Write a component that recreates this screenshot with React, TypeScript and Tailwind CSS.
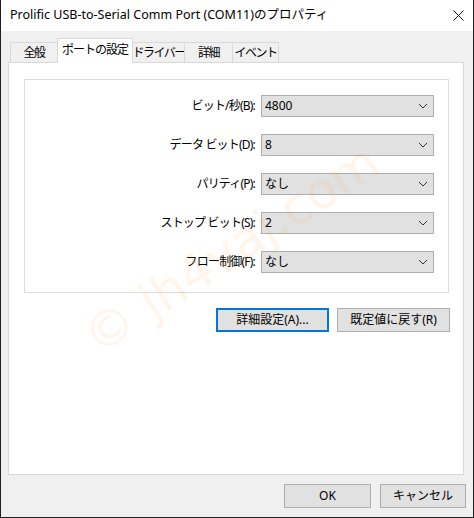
import React from "react";

const font = { fontFamily: '"Noto Sans", "Noto Sans CJK JP", sans-serif' };

const Chevron = () => (
  <svg width="10" height="6" viewBox="0 0 10 6" className="shrink-0">
    <path d="M1 1 L5 5 L9 1" fill="none" stroke="#333" strokeWidth="1" />
  </svg>
);

const rows = [
  { label: "ビット/秒(B):", value: "4800" },
  { label: "データ ビット(D):", value: "8" },
  { label: "パリティ(P):", value: "なし" },
  { label: "ストップ ビット(S):", value: "2" },
  { label: "フロー制御(F):", value: "なし" },
];

const tabs = [
  { name: "全般", w: "w-[48px]" },
  { name: "ポートの設定", w: "w-[76px]", active: true },
  { name: "ドライバー", w: "w-[53px]" },
  { name: "詳細", w: "w-[49px]" },
  { name: "イベント", w: "w-[47px]" },
];

export default function App() {
  return (
    <div
      className="relative w-[474px] h-[518px] bg-[#f0f0f0] border-l border-r border-b border-[#1f1f1f] text-[12px] text-black overflow-hidden flex flex-col"
      style={font}
    >
      {/* title bar */}
      <div className="h-[31px] bg-white flex items-center justify-between pl-[9px] pr-[9px] shrink-0">
        <span className="text-[12.5px]">Prolific USB-to-Serial Comm Port (COM11)のプロパティ</span>
        <svg width="11" height="11" viewBox="0 0 11 11">
          <path d="M0.5 0.5 L10.5 10.5 M10.5 0.5 L0.5 10.5" stroke="#111" strokeWidth="1" />
        </svg>
      </div>

      {/* tabs */}
      <div className="h-[31px] flex items-end pl-[9px] shrink-0">
        {tabs.map((t, i) => (
          <div
            key={t.name}
            className={
              t.active
                ? `${t.w} h-[25px] -ml-px -mb-px relative z-10 bg-white border border-b-0 border-[#d9d9d9] flex items-center justify-center whitespace-nowrap tracking-[-1px] pb-[2px]`
                : `${t.w} h-[20px] ${i === 0 ? "" : "-ml-px"} bg-[#f0f0f0] border border-b-0 border-[#d9d9d9] flex items-center justify-center whitespace-nowrap tracking-[-1.5px]`
            }
          >
            {t.name}
          </div>
        ))}
      </div>

      {/* page */}
      <div className="ml-[7px] w-[456px] h-[413px] bg-white border border-[#d9d9d9] pt-[16px] pl-[15px] shrink-0">
        <div className="w-[425px] h-[214px] border border-[#dcdcdc] flex flex-col gap-[17px] pt-[15px] pr-[14px]">
          {rows.map((r) => (
            <div key={r.label} className="flex items-center justify-end gap-[6px]">
              <span className="tracking-[-0.8px] whitespace-nowrap">{r.label}</span>
              <div className="w-[173px] h-[22px] bg-[#e1e1e1] border border-[#adadad] flex items-center justify-between pl-[3px] pr-[5px]">
                <span>{r.value}</span>
                <Chevron />
              </div>
            </div>
          ))}
        </div>
        <div className="w-[426px] flex justify-end gap-[8px] mt-[15px]">
          <button className="w-[113px] h-[24px] bg-[#e1e1e1] border-2 border-[#0078d7] flex items-center justify-center">
            詳細設定(A)...
          </button>
          <button className="w-[113px] h-[24px] bg-[#e1e1e1] border border-[#adadad] flex items-center justify-center">
            既定値に戻す(R)
          </button>
        </div>
      </div>

      {/* footer */}
      <div className="flex justify-end gap-[9px] pt-[9px] pr-[7px]">
        <button className="w-[87px] h-[24px] bg-[#e1e1e1] border border-[#adadad] flex items-center justify-center">
          OK
        </button>
        <button className="w-[86px] h-[24px] bg-[#e1e1e1] border border-[#adadad] flex items-center justify-center">
          キャンセル
        </button>
      </div>

      {/* watermark */}
      <span
        className="absolute left-[88px] top-[305px] text-[50px] text-[#ff9a2e] opacity-[0.09] -rotate-[33deg] origin-left whitespace-nowrap pointer-events-none select-none"
        style={{ fontFamily: '"DejaVu Sans", sans-serif' }}
      >
        © jh4vaj.com
      </span>
    </div>
  );
}
